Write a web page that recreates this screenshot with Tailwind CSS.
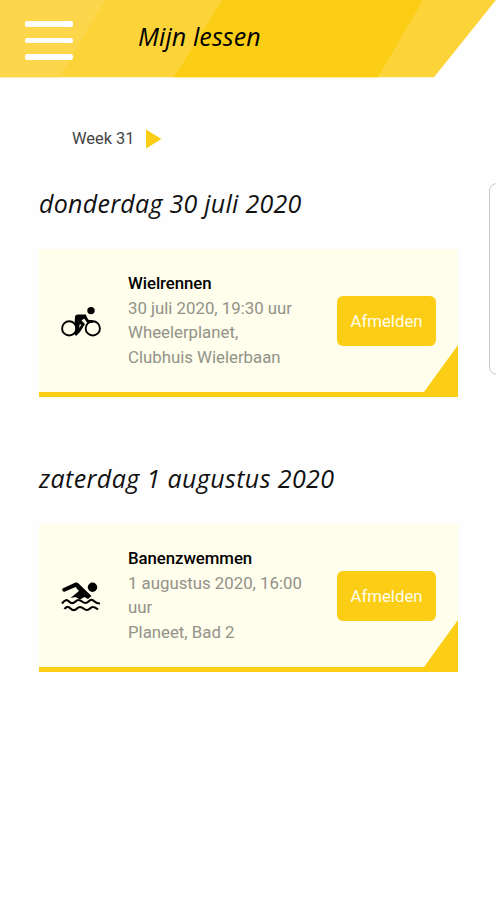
<!DOCTYPE html>
<html lang="nl">
<head>
<meta charset="utf-8">
<title>Mijn lessen</title>
<script src="https://cdn.jsdelivr.net/npm/@tailwindcss/browser@4"></script>
</head>
<body class="relative h-[900px] w-[496px] overflow-hidden bg-[#fefefe] font-['Roboto',sans-serif] text-black">
<header class="relative h-[78px] w-full">
  <svg class="absolute inset-0" width="496" height="78" viewBox="0 0 496 78">
    <path d="M0 0H496L434 77.3H0Z" fill="#fcd43a"/>
    <path d="M0 0H105L60 77.3H0Z" fill="#fcd64b"/>
    <path d="M222 0H423L378 77.3H174Z" fill="#fbce15"/>
  </svg>
  <div class="relative flex h-[78px] items-start">
    <button class="mt-[21px] ml-[25px] flex w-12 flex-col gap-[11px]" aria-label="Menu">
      <span class="h-[5.5px] w-full rounded-[2px] bg-white"></span>
      <span class="h-[5.5px] w-full rounded-[2px] bg-white"></span>
      <span class="h-[5.5px] w-full rounded-[2px] bg-white"></span>
    </button>
    <h1 class="mt-[18px] ml-[65px] whitespace-nowrap font-['Open_Sans',sans-serif] text-[25px] leading-[36px] tracking-[0.1px] italic">Mijn lessen</h1>
  </div>
</header>
<main class="pr-[38px] pl-[39px]">
  <div class="flex items-center pt-[48px] pl-[33px]">
    <span class="w-[74px] pt-px text-[16.4px] leading-6 text-[#444]">Week 31</span>
    <svg width="16" height="20" viewBox="0 0 16 20"><path d="M0 0.5L15.5 10L0 19.5Z" fill="#fbce15"/></svg>
  </div>
  <section>
    <h2 class="mt-[34px] h-9 whitespace-nowrap font-['Open_Sans',sans-serif] text-[25px] leading-9 tracking-[0.27px] text-[#111] italic">donderdag 30 juli 2020</h2>
    <article class="relative mt-[28px] flex h-[148px] border-b-[5px] border-[#fbce15] bg-[#fffdec] pl-[22px]">
      <svg class="mt-[57px] shrink-0" width="40" height="32" viewBox="0 0 40 32">
        <g fill="none" stroke="#000"><circle cx="8.2" cy="22.4" r="7.1" stroke-width="1.9"/><circle cx="31.8" cy="22.4" r="7.1" stroke-width="1.9"/><path d="M16 11H24L27 15.5H31" stroke-width="3" stroke-linecap="round" stroke-linejoin="round"/></g>
        <circle cx="30" cy="4.6" r="3.7"/>
        <path d="M14 11Q14 8.5 17 8.5H25L25.5 11L20.5 14.5L24 18L19 26L15 30L13.5 28L14.8 21L13.5 18ZM18.8 18L18 22L20.3 19Z" fill-rule="evenodd"/>
      </svg>
      <div class="mt-[22px] ml-[27px] w-[209px] text-[16.8px] leading-[24.7px] whitespace-nowrap text-[#929288]">
        <h3 class="font-medium tracking-[-0.05px] text-black">Wielrennen</h3>
        <p>30 juli 2020, 19:30 uur</p><p>Wheelerplanet,</p><p>Clubhuis Wielerbaan</p>
      </div>
      <button class="mt-[47px] h-[50px] w-[99px] shrink-0 rounded-[6px] bg-[#fbce15] pt-[2px] text-[16.8px] text-[#fffdec]">Afmelden</button>
      <svg class="absolute right-0 bottom-0" width="34" height="47" viewBox="0 0 34 47"><path d="M34 0V47H0Z" fill="#fbce15"/></svg>
    </article>
  </section>
  <section>
    <h2 class="mt-[63px] h-9 whitespace-nowrap font-['Open_Sans',sans-serif] text-[25px] leading-9 tracking-[0.4px] text-[#111] italic">zaterdag 1 augustus 2020</h2>
    <article class="relative mt-[28px] flex h-[148px] border-b-[5px] border-[#fbce15] bg-[#fffdec] pl-[22px]">
      <svg class="mt-[57px] shrink-0" width="40" height="32" viewBox="0 0 40 32">
        <circle cx="31.5" cy="6.2" r="4.7"/>
        <path d="M1.5 7.5L14.5 1.5Q16 1 17.5 2.5L30.5 15L27 18L23.5 16L19 18.5L14.5 16L9.5 17L18 10L14.5 6L3.5 10.7Q0.5 10.5 1.5 7.5Z"/>
        <path d="M1 22.5C4 18.5 6 18.5 8 20.5S12 23 14.5 20.5S18.500 18.500 21 20.500S25 23 27.500 20.500S31.500 18.500 33.500 20.500S36 22.500 39 22.500M3.500 28C5.500 25 7.500 25.500 9.500 27.500S13.500 30 16 27.500S20 25.500 22.500 27.500S26.500 30 29 27.500S33.500 25.500 37 28.500" fill="none" stroke="#000" stroke-width="2.2"/>
      </svg>
      <div class="mt-[22px] ml-[27px] w-[209px] text-[16.8px] leading-[24.7px] whitespace-nowrap text-[#929288]">
        <h3 class="font-medium tracking-[-0.05px] text-black">Banenzwemmen</h3>
        <p>1 augustus 2020, 16:00<br>uur</p><p>Planeet, Bad 2</p>
      </div>
      <button class="mt-[47px] h-[50px] w-[99px] shrink-0 rounded-[6px] bg-[#fbce15] pt-[2px] text-[16.8px] text-[#fffdec]">Afmelden</button>
      <svg class="absolute right-0 bottom-0" width="34" height="47" viewBox="0 0 34 47"><path d="M34 0V47H0Z" fill="#fbce15"/></svg>
    </article>
  </section>
</main>
<aside class="absolute top-[183px] -right-4 h-[192px] w-[23px] rounded-[8px] border border-[#ccc] bg-[#fefefe]"></aside>
</body>
</html>
